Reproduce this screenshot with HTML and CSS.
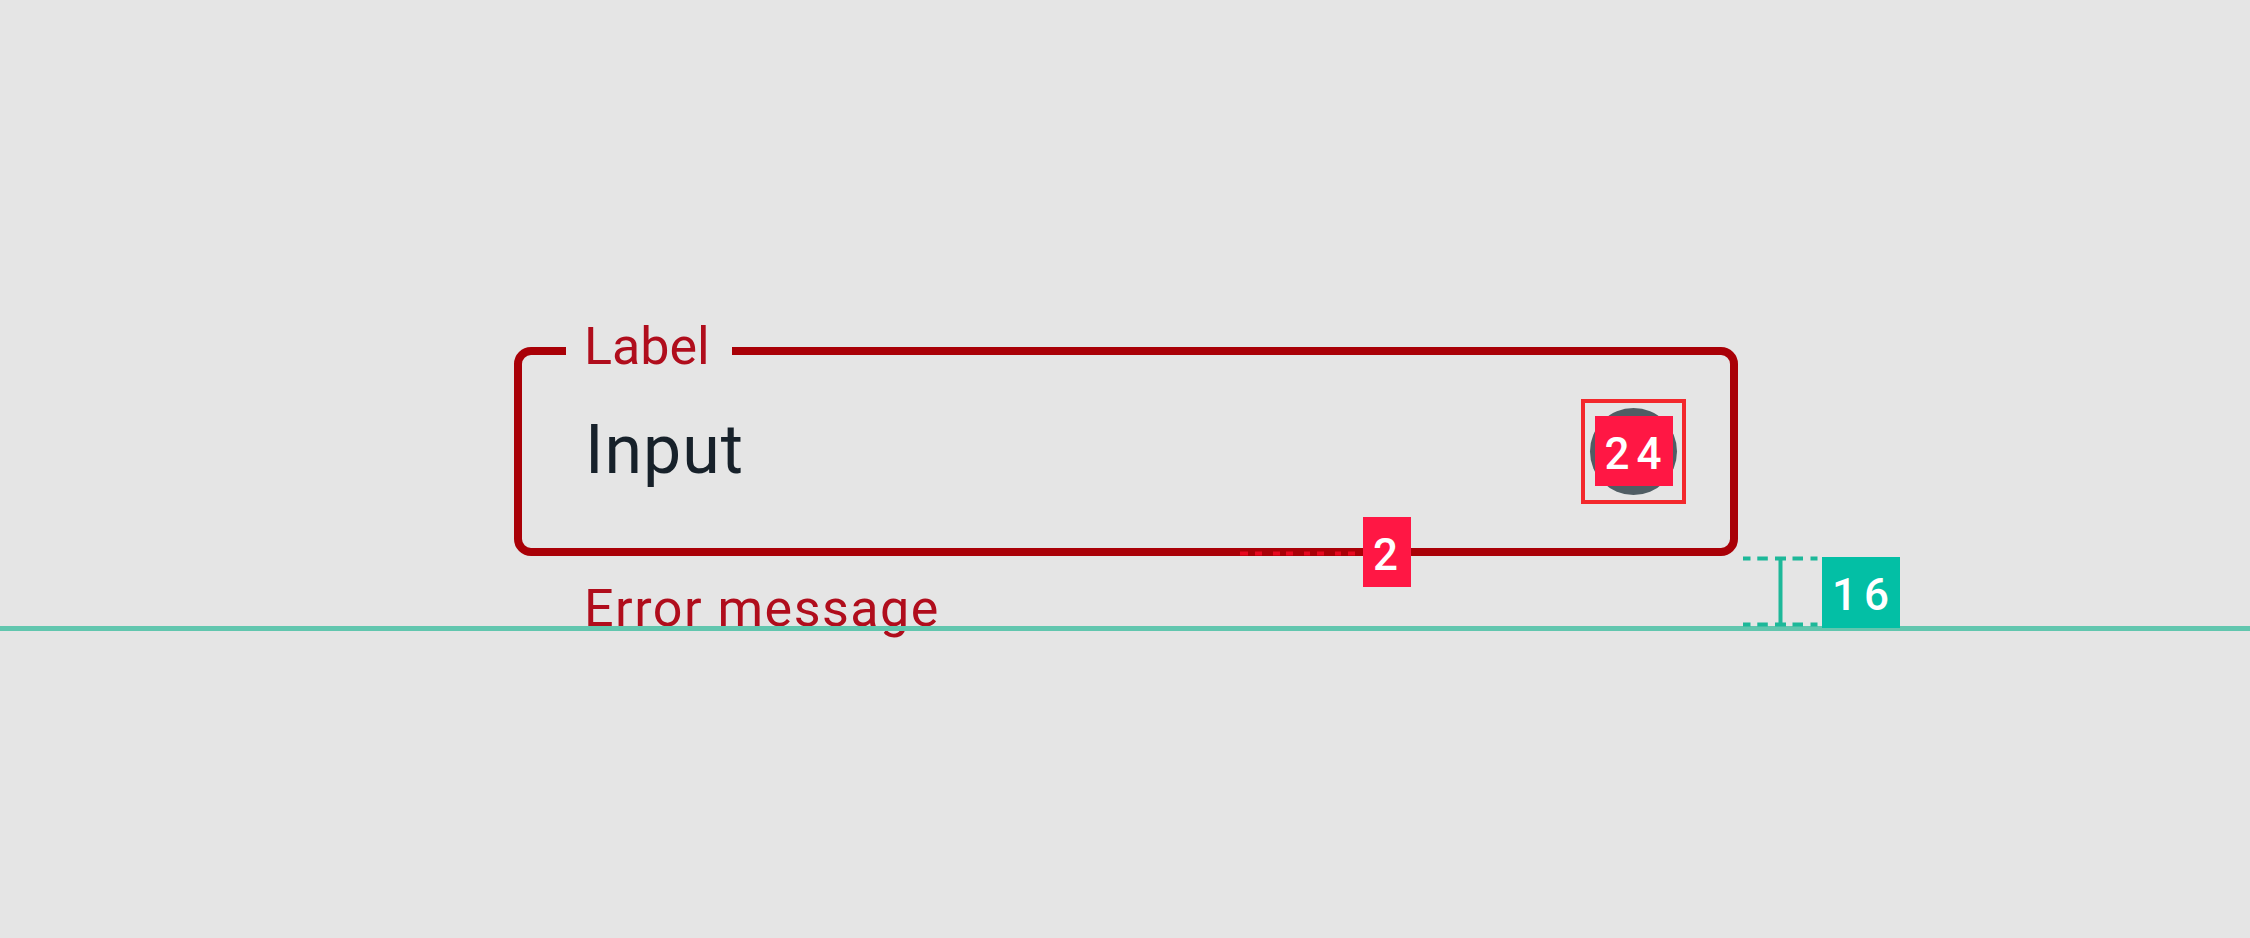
FILE: index.html
```
<!DOCTYPE html>
<html lang="en">
<head>
    <meta charset="UTF-8">
    <meta name="viewport" content="width=device-width, initial-scale=1.0">
    <title>Text field - error state</title>
    <link rel="stylesheet" href="styles.css">
</head>
<body>
    <main class="canvas">
        <fieldset class="field">
            <legend class="label">Label</legend>
            <div class="field-row">
                <span class="input-text">Input</span>
                <div class="icon-box">
                    <div class="icon"></div>
                    <span class="badge badge-icon">24</span>
                </div>
            </div>
        </fieldset>
        <p class="error-message">Error message</p>

        <!-- measurements -->
        <div class="baseline"></div>
        <svg class="border-dashes" width="123" height="5" viewBox="0 0 123 5">
            <path d="M0 2.5h8M15 2.5h7M33 2.5h7M46 2.5h7M64 2.5h6M77 2.5h7M95 2.5h6M108 2.5h7" />
        </svg>
        <span class="badge badge-border">2</span>
        <svg class="spacing" width="76" height="72" viewBox="0 0 76 72">
            <path d="M1 2.5h7.5M15.3 2.5h10.5M33 2.5h11M50.5 2.5h10.5M68.5 2.5h7" />
            <path d="M1 68.5h7.5M15.3 68.5h10.5M33 68.5h11M50.5 68.5h10.5M68.5 68.5h7" />
            <path d="M38.5 2v66" />
        </svg>
        <span class="badge badge-spacing">16</span>
    </main>
</body>
</html>
```
FILE: styles.css
```
body {
    margin: 0;
    background-color: #e5e5e5;
    font-family: Roboto, 'Liberation Sans', sans-serif;
}
.canvas {
    position: relative;
    box-sizing: border-box;
    height: 938px;
    padding: 317px 512px 0 514px;
    overflow: hidden;
}
.field {
    box-sizing: border-box;
    width: 1224px;
    height: 239px;
    margin: 0;
    padding: 0 44px;
    border: 8px solid #a90007;
    border-radius: 17px;
}
.label {
    box-sizing: border-box;
    width: 166px;
    padding: 0 0 8px 18px;
    color: #b00d1c;
    font-size: 52px;
    line-height: 60px;
    white-space: nowrap;
}
.field-row {
    display: flex;
    justify-content: space-between;
    align-items: center;
    height: 133px;
    padding-left: 19px;
}
.input-text {
    padding-bottom: 4px;
    color: #17212a;
    font-size: 68px;
    line-height: 80px;
    letter-spacing: 1px;
}
.icon-box {
    position: relative;
    display: flex;
    justify-content: center;
    align-items: center;
    box-sizing: border-box;
    width: 105px;
    height: 105px;
    border: 4px solid #f3282c;
}
.icon {
    width: 87px;
    height: 87px;
    border-radius: 50%;
    background-color: #505d64;
}
.error-message {
    margin: 23px 0 0 70px;
    color: #b00d1c;
    font-size: 52px;
    line-height: 60px;
    letter-spacing: 1.5px;
}
.badge {
    position: absolute;
    display: flex;
    justify-content: center;
    align-items: center;
    box-sizing: border-box;
    height: 70px;
    background-color: #ff1744;
    color: #fff;
    font-size: 44px;
    font-weight: 500;
    line-height: 1;
}
.badge-icon {
    top: 13px;
    left: 10px;
    width: 78px;
    padding: 5px 0 0 5px;
    letter-spacing: 7px;
}
.badge-border {
    top: 517px;
    left: 1363px;
    width: 48px;
    padding: 5px 3px 0 0;
}
.badge-spacing {
    top: 557px;
    left: 1822px;
    width: 78px;
    height: 71px;
    padding: 4px 0 0 6px;
    background-color: #03bfa5;
    letter-spacing: 7px;
}
.baseline {
    position: absolute;
    top: 626px;
    left: 0;
    width: 100%;
    height: 5px;
    background-color: #61c6ae;
}
.border-dashes {
    position: absolute;
    top: 551px;
    left: 1240px;
    fill: none;
    stroke: #e8081f;
    stroke-width: 4;
}
.spacing {
    position: absolute;
    top: 556px;
    left: 1742px;
    fill: none;
    stroke: #1db899;
    stroke-width: 4;
}
```
